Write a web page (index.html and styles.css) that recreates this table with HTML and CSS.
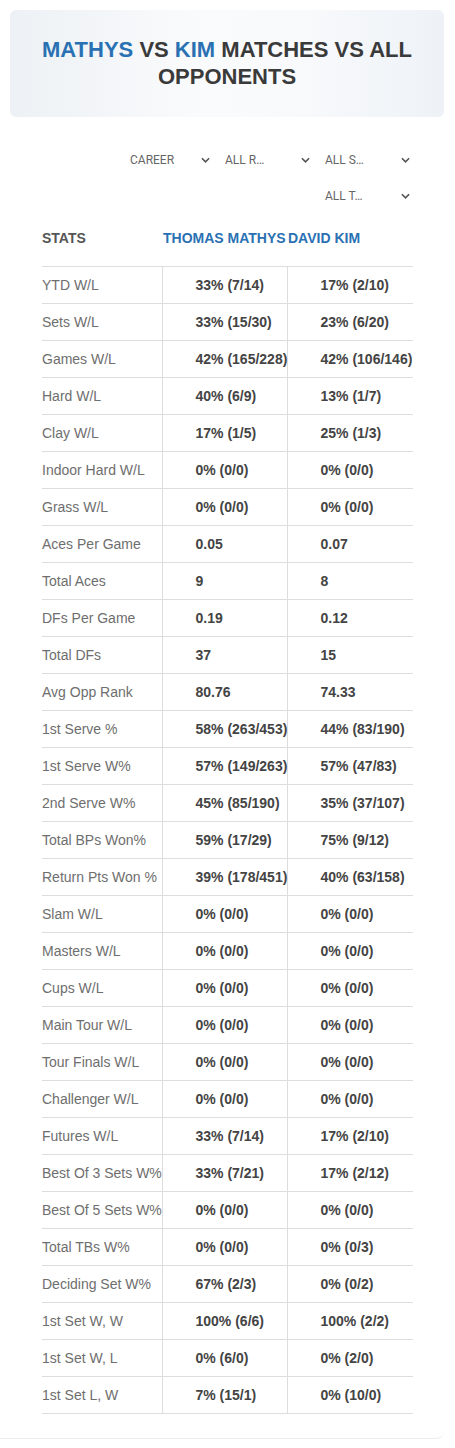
FILE: index.html
```html
<!DOCTYPE html>
<html lang="en">
<head>
    <meta charset="UTF-8">
    <meta name="viewport" content="width=device-width, initial-scale=1.0">
    <title>Mathys vs Kim</title>
    <link rel="stylesheet" href="styles.css">
</head>
<body>
    <div class="page">
        <!-- Title -->
        <div class="title-card">
            <h1><span class="blue">MATHYS</span> VS <span class="blue">KIM</span> MATCHES VS ALL OPPONENTS</h1>
        </div>

        <div class="content">
            <!-- Filters -->
            <div class="filters">
                <div class="select first">CAREER<svg class="chev" viewBox="0 0 10 6"><path d="M1 1l4 4 4-4"/></svg></div>
                <div class="select">ALL R…<svg class="chev" viewBox="0 0 10 6"><path d="M1 1l4 4 4-4"/></svg></div>
                <div class="select">ALL S…<svg class="chev" viewBox="0 0 10 6"><path d="M1 1l4 4 4-4"/></svg></div>
                <div class="select">ALL T…<svg class="chev" viewBox="0 0 10 6"><path d="M1 1l4 4 4-4"/></svg></div>
            </div>

            <!-- Stats table -->
            <table class="stats">
                <thead>
                    <tr>
                        <th class="label-head">STATS</th>
                        <th>THOMAS MATHYS</th>
                        <th>DAVID KIM</th>
                    </tr>
                </thead>
                <tbody>
                    <tr><td>YTD W/L</td><td>33% (7/14)</td><td>17% (2/10)</td></tr>
                    <tr><td>Sets W/L</td><td>33% (15/30)</td><td>23% (6/20)</td></tr>
                    <tr><td>Games W/L</td><td>42% (165/228)</td><td>42% (106/146)</td></tr>
                    <tr><td>Hard W/L</td><td>40% (6/9)</td><td>13% (1/7)</td></tr>
                    <tr><td>Clay W/L</td><td>17% (1/5)</td><td>25% (1/3)</td></tr>
                    <tr><td>Indoor Hard W/L</td><td>0% (0/0)</td><td>0% (0/0)</td></tr>
                    <tr><td>Grass W/L</td><td>0% (0/0)</td><td>0% (0/0)</td></tr>
                    <tr><td>Aces Per Game</td><td>0.05</td><td>0.07</td></tr>
                    <tr><td>Total Aces</td><td>9</td><td>8</td></tr>
                    <tr><td>DFs Per Game</td><td>0.19</td><td>0.12</td></tr>
                    <tr><td>Total DFs</td><td>37</td><td>15</td></tr>
                    <tr><td>Avg Opp Rank</td><td>80.76</td><td>74.33</td></tr>
                    <tr><td>1st Serve %</td><td>58% (263/453)</td><td>44% (83/190)</td></tr>
                    <tr><td>1st Serve W%</td><td>57% (149/263)</td><td>57% (47/83)</td></tr>
                    <tr><td>2nd Serve W%</td><td>45% (85/190)</td><td>35% (37/107)</td></tr>
                    <tr><td>Total BPs Won%</td><td>59% (17/29)</td><td>75% (9/12)</td></tr>
                    <tr><td>Return Pts Won %</td><td>39% (178/451)</td><td>40% (63/158)</td></tr>
                    <tr><td>Slam W/L</td><td>0% (0/0)</td><td>0% (0/0)</td></tr>
                    <tr><td>Masters W/L</td><td>0% (0/0)</td><td>0% (0/0)</td></tr>
                    <tr><td>Cups W/L</td><td>0% (0/0)</td><td>0% (0/0)</td></tr>
                    <tr><td>Main Tour W/L</td><td>0% (0/0)</td><td>0% (0/0)</td></tr>
                    <tr><td>Tour Finals W/L</td><td>0% (0/0)</td><td>0% (0/0)</td></tr>
                    <tr><td>Challenger W/L</td><td>0% (0/0)</td><td>0% (0/0)</td></tr>
                    <tr><td>Futures W/L</td><td>33% (7/14)</td><td>17% (2/10)</td></tr>
                    <tr><td>Best Of 3 Sets W%</td><td>33% (7/21)</td><td>17% (2/12)</td></tr>
                    <tr><td>Best Of 5 Sets W%</td><td>0% (0/0)</td><td>0% (0/0)</td></tr>
                    <tr><td>Total TBs W%</td><td>0% (0/0)</td><td>0% (0/3)</td></tr>
                    <tr><td>Deciding Set W%</td><td>67% (2/3)</td><td>0% (0/2)</td></tr>
                    <tr><td>1st Set W, W</td><td>100% (6/6)</td><td>100% (2/2)</td></tr>
                    <tr><td>1st Set W, L</td><td>0% (6/0)</td><td>0% (2/0)</td></tr>
                    <tr><td>1st Set L, W</td><td>7% (15/1)</td><td>0% (10/0)</td></tr>
                </tbody>
            </table>
        </div>
    </div>
</body>
</html>
```

FILE: styles.css
```css
body {
    margin: 0;
    padding: 0;
    background-color: white;
    font-family: "Liberation Sans", Arial, sans-serif;
}

.page {
    width: 444px;
    padding-bottom: 24px;
    border-bottom: 1px solid #ececec;
    border-bottom-right-radius: 8px;
}

.title-card {
    margin: 10px 0 0 10px;
    height: 107px;
    box-sizing: border-box;
    padding: 26px 14px 0;
    border-radius: 6px;
    background: linear-gradient(90deg, #edf1f5 0%, #fafbfc 45%, #f7f9fb 70%, #eef2f7 100%);
}

.title-card h1 {
    margin: 0;
    font-size: 22px;
    line-height: 27px;
    font-weight: bold;
    text-align: center;
    color: #3a3a3a;
}

.blue {
    color: #2a71b3;
}

.content {
    padding: 25px 0 0 42px;
    width: 372px;
}

.filters {
    display: flex;
    flex-wrap: wrap;
    justify-content: flex-end;
}

.select {
    width: 93px;
    height: 36px;
    margin-left: 7px;
    padding: 0 4px;
    box-sizing: border-box;
    display: flex;
    align-items: center;
    justify-content: space-between;
    font-family: Roboto, "Noto Sans", sans-serif;
    font-size: 12px;
    color: #666;
}

.select.first {
    padding-left: 9px;
}

.chev {
    width: 9px;
    height: 6px;
    fill: none;
    stroke: #555;
    stroke-width: 1.8;
}

.stats {
    width: 371px;
    border-collapse: collapse;
    table-layout: fixed;
}

.stats th {
    height: 52px;
    box-sizing: border-box;
    padding: 16px 0 0 1px;
    vertical-align: top;
    text-align: left;
    font-size: 14px;
    line-height: 16px;
    color: #2a71b3;
    white-space: nowrap;
}

.stats th.label-head {
    width: 120px;
    padding-left: 0;
    color: #555;
}

.stats th:nth-child(2) {
    width: 125px;
}

.stats td {
    height: 36px;
    padding: 0 0 0 33px;
    border-top: 1px solid #ddd;
    border-bottom: 1px solid #ddd;
    border-left: 1px solid #ddd;
    font-size: 14px;
    font-weight: bold;
    color: #444;
    white-space: nowrap;
}

.stats td:first-child {
    padding-left: 0;
    border-left: none;
    font-weight: normal;
    color: #6e6e6e;
}
```
